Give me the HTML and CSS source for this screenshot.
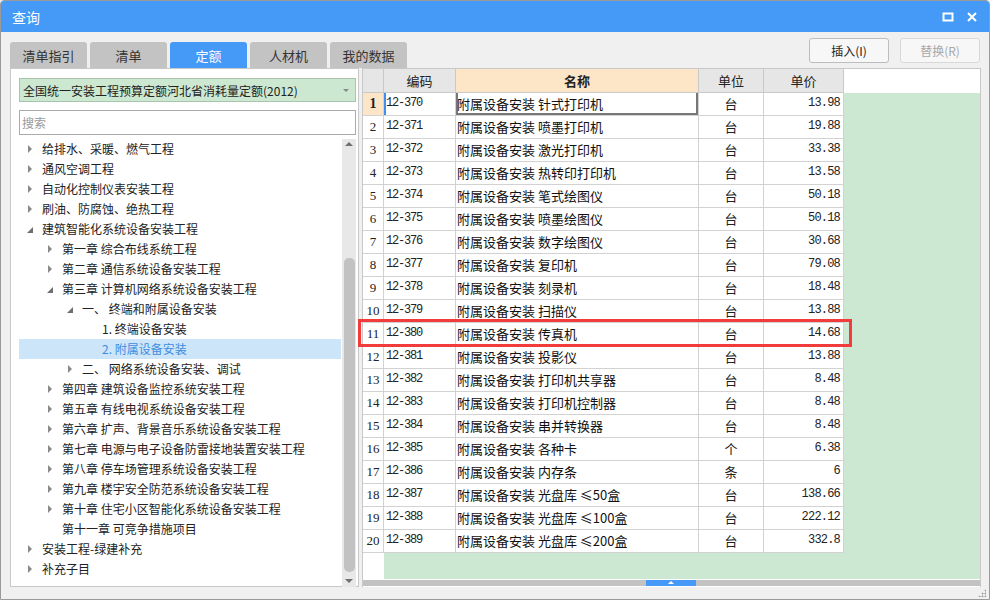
FILE: index.html
```html
<!DOCTYPE html>
<html lang="zh">
<head>
<meta charset="utf-8">
<title>查询</title>
<link rel="stylesheet" href="styles.css">
</head>
<body>
<div class="window">
  <div class="titlebar">
    <span class="title">查询</span>
    <div class="winbtns">
      <svg width="12" height="12" viewBox="0 0 12 12"><rect x="1.5" y="2.5" width="9" height="7" fill="none" stroke="#fff" stroke-width="2"/></svg>
      <svg width="12" height="12" viewBox="0 0 12 12"><path d="M2 2 L10 10 M10 2 L2 10" stroke="#fff" stroke-width="2"/></svg>
    </div>
  </div>
  <div class="toolbar">
    <div class="tabs">
      <div class="tab">清单指引</div>
      <div class="tab">清单</div>
      <div class="tab active">定额</div>
      <div class="tab">人材机</div>
      <div class="tab">我的数据</div>
    </div>
    <div class="buttons">
      <button class="btn">插入(I)</button>
      <button class="btn disabled">替换(R)</button>
    </div>
  </div>
  <div class="main">
    <div class="leftpanel">
      <div class="select">全国统一安装工程预算定额河北省消耗量定额(2012)<span class="caret"></span></div>
      <div class="search">搜索</div>
      <div class="treewrap">
        <div class="tree">
          <div class="node l0"><span class="arr c"></span>给排水、采暖、燃气工程</div>
          <div class="node l0"><span class="arr c"></span>通风空调工程</div>
          <div class="node l0"><span class="arr c"></span>自动化控制仪表安装工程</div>
          <div class="node l0"><span class="arr c"></span>刷油、防腐蚀、绝热工程</div>
          <div class="node l0"><span class="arr e"></span>建筑智能化系统设备安装工程</div>
          <div class="node l1"><span class="arr c"></span>第一章 综合布线系统工程</div>
          <div class="node l1"><span class="arr c"></span>第二章 通信系统设备安装工程</div>
          <div class="node l1"><span class="arr e"></span>第三章 计算机网络系统设备安装工程</div>
          <div class="node l2"><span class="arr e"></span>一、 终端和附属设备安装</div>
          <div class="node l3"><span class="arr"></span>1. 终端设备安装</div>
          <div class="node l3 sel"><span class="arr"></span>2. 附属设备安装</div>
          <div class="node l2"><span class="arr c"></span>二、 网络系统设备安装、调试</div>
          <div class="node l1"><span class="arr c"></span>第四章 建筑设备监控系统安装工程</div>
          <div class="node l1"><span class="arr c"></span>第五章 有线电视系统设备安装工程</div>
          <div class="node l1"><span class="arr c"></span>第六章 扩声、背景音乐系统设备安装工程</div>
          <div class="node l1"><span class="arr c"></span>第七章 电源与电子设备防雷接地装置安装工程</div>
          <div class="node l1"><span class="arr c"></span>第八章 停车场管理系统设备安装工程</div>
          <div class="node l1"><span class="arr c"></span>第九章 楼宇安全防范系统设备安装工程</div>
          <div class="node l1"><span class="arr c"></span>第十章 住宅小区智能化系统设备安装工程</div>
          <div class="node l1"><span class="arr"></span>第十一章 可竞争措施项目</div>
          <div class="node l0"><span class="arr c"></span>安装工程-绿建补充</div>
          <div class="node l0"><span class="arr c"></span>补充子目</div>
        </div>
        <div class="vscroll">
          <span class="up"></span>
          <div class="vtrack"><div class="vthumb"></div></div>
          <span class="down"></span>
        </div>
      </div>
    </div>
    <div class="tablepanel">
      <div class="grid">
        <div class="hd"></div><div class="hd">编码</div><div class="hd name">名称</div><div class="hd">单位</div><div class="hd">单价</div><div class="hfill"></div>

        <div class="rn first">1</div><div class="code cur">12-370</div><div class="nm focus">附属设备安装 针式打印机</div><div class="un">台</div><div class="pr">13.98</div><div class="fill"></div>
        <div class="rn">2</div><div class="code">12-371</div><div class="nm">附属设备安装 喷墨打印机</div><div class="un">台</div><div class="pr">19.88</div><div class="fill"></div>
        <div class="rn">3</div><div class="code">12-372</div><div class="nm">附属设备安装 激光打印机</div><div class="un">台</div><div class="pr">33.38</div><div class="fill"></div>
        <div class="rn">4</div><div class="code">12-373</div><div class="nm">附属设备安装 热转印打印机</div><div class="un">台</div><div class="pr">13.58</div><div class="fill"></div>
        <div class="rn">5</div><div class="code">12-374</div><div class="nm">附属设备安装 笔式绘图仪</div><div class="un">台</div><div class="pr">50.18</div><div class="fill"></div>
        <div class="rn">6</div><div class="code">12-375</div><div class="nm">附属设备安装 喷墨绘图仪</div><div class="un">台</div><div class="pr">50.18</div><div class="fill"></div>
        <div class="rn">7</div><div class="code">12-376</div><div class="nm">附属设备安装 数字绘图仪</div><div class="un">台</div><div class="pr">30.68</div><div class="fill"></div>
        <div class="rn">8</div><div class="code">12-377</div><div class="nm">附属设备安装 复印机</div><div class="un">台</div><div class="pr">79.08</div><div class="fill"></div>
        <div class="rn">9</div><div class="code">12-378</div><div class="nm">附属设备安装 刻录机</div><div class="un">台</div><div class="pr">18.48</div><div class="fill"></div>
        <div class="rn">10</div><div class="code">12-379</div><div class="nm">附属设备安装 扫描仪</div><div class="un">台</div><div class="pr">13.88</div><div class="fill"></div>
        <div class="rn">11</div><div class="code">12-380</div><div class="nm">附属设备安装 传真机</div><div class="un">台</div><div class="pr">14.68</div><div class="fill"></div>
        <div class="rn">12</div><div class="code">12-381</div><div class="nm">附属设备安装 投影仪</div><div class="un">台</div><div class="pr">13.88</div><div class="fill"></div>
        <div class="rn">13</div><div class="code">12-382</div><div class="nm">附属设备安装 打印机共享器</div><div class="un">台</div><div class="pr">8.48</div><div class="fill"></div>
        <div class="rn">14</div><div class="code">12-383</div><div class="nm">附属设备安装 打印机控制器</div><div class="un">台</div><div class="pr">8.48</div><div class="fill"></div>
        <div class="rn">15</div><div class="code">12-384</div><div class="nm">附属设备安装 串并转换器</div><div class="un">台</div><div class="pr">8.48</div><div class="fill"></div>
        <div class="rn">16</div><div class="code">12-385</div><div class="nm">附属设备安装 各种卡</div><div class="un">个</div><div class="pr">6.38</div><div class="fill"></div>
        <div class="rn">17</div><div class="code">12-386</div><div class="nm">附属设备安装 内存条</div><div class="un">条</div><div class="pr">6</div><div class="fill"></div>
        <div class="rn">18</div><div class="code">12-387</div><div class="nm">附属设备安装 光盘库 ≤50盒</div><div class="un">台</div><div class="pr">138.66</div><div class="fill"></div>
        <div class="rn">19</div><div class="code">12-388</div><div class="nm">附属设备安装 光盘库 ≤100盒</div><div class="un">台</div><div class="pr">222.12</div><div class="fill"></div>
        <div class="rn">20</div><div class="code">12-389</div><div class="nm">附属设备安装 光盘库 ≤200盒</div><div class="un">台</div><div class="pr">332.8</div><div class="fill"></div>
      </div>
      <div class="tail"><div class="tailrn"></div><div class="tailfill"></div></div>
      <div class="hscroll"><div class="hthumb"><span class="hup"></span></div></div>
      <div class="redbox"></div>
    </div>
  </div>
  <div class="statusbar"><span class="grip"></span></div>
</div>
</body>
</html>
```
FILE: styles.css
```css
* { box-sizing: border-box; }
html, body { margin: 0; padding: 0; }
body {
  width: 990px;
  height: 600px;
  overflow: hidden;
  font-family: "Noto Sans CJK SC", "Liberation Sans", sans-serif;
  font-size: 12px;
  color: #222;
  background: #fff;
}
.window {
  width: 990px;
  height: 600px;
  border: 1px solid #9a9a9a;
  border-radius: 4px 4px 0 0;
  background: #f0f0f0;
  display: flex;
  flex-direction: column;
  overflow: hidden;
}
.titlebar {
  height: 31px;
  flex: none;
  background: #4599f7;
  display: flex;
  align-items: center;
  justify-content: space-between;
  padding: 0 11px 0 11px;
}
.title { color: #fff; font-size: 14px; }
.winbtns { display: flex; gap: 12px; align-items: center; }
.winbtns svg { display: block; }

.toolbar {
  height: 36px;
  flex: none;
  display: flex;
  justify-content: space-between;
  padding: 0 9px 0 9px;
}
.tabs { display: flex; align-items: flex-end; gap: 3px; }
.tab {
  width: 77px;
  height: 26px;
  background: #c3c3c3;
  border-radius: 3px 3px 0 0;
  color: #333;
  font-size: 13px;
  display: flex;
  align-items: center;
  justify-content: center;
}
.tab.active { background: #4599f7; color: #fff; }
.buttons { display: flex; gap: 11px; padding-top: 6px; }
.btn {
  width: 80px;
  height: 25px;
  border: 1px solid #bdbdbd;
  border-radius: 3px;
  background: #f7f7f7;
  font-family: "Noto Sans CJK SC", "Liberation Sans", sans-serif;
  font-size: 12px;
  color: #222;
  padding: 0;
}
.btn.disabled { color: #a8a8a8; border-color: #d8d8d8; }

.main {
  height: 519px;
  flex: none;
  display: flex;
  gap: 3px;
  padding-left: 9px;
}
.leftpanel {
  width: 349px;
  height: 519px;
  background: #fff;
  border: 1px solid #c8c8c8;
  padding: 9px 2px 0 8px;
  display: flex;
  flex-direction: column;
}
.select {
  height: 24px;
  width: 337px;
  background: #cde8d0;
  border: 1px solid #a9c4ac;
  display: flex;
  align-items: center;
  padding-left: 3px;
  font-size: 12px;
  position: relative;
}
.caret {
  position: absolute;
  right: 6px;
  top: 10px;
  border-left: 3px solid transparent;
  border-right: 3px solid transparent;
  border-top: 3px solid #888;
}
.search {
  margin-top: 8px;
  height: 25px;
  width: 337px;
  border: 1px solid #aaa;
  display: flex;
  align-items: center;
  padding-left: 2px;
  color: #9a9a9a;
  font-size: 12px;
}
.treewrap {
  margin-top: 4px;
  flex: 1;
  display: flex;
  min-height: 0;
}
.tree { width: 323px; margin-top: 0; }
.node {
  height: 20px;
  display: flex;
  align-items: center;
  white-space: nowrap;
  font-size: 12px;
  color: #222;
  padding-bottom: 1px;
}
.node.l0 { padding-left: 7px; }
.node.l1 { padding-left: 27px; }
.node.l2 { padding-left: 47px; }
.node.l3 { padding-left: 67px; }
.node.sel { background: #cce5f8; color: #3f8de0; }
.arr { width: 16px; flex: none; height: 20px; position: relative; }
.arr.c::before {
  content: "";
  position: absolute;
  left: 2px;
  top: 6px;
  border-top: 4px solid transparent;
  border-bottom: 4px solid transparent;
  border-left: 4px solid #8a8a8a;
}
.arr.e::before {
  content: "";
  position: absolute;
  left: 1px;
  top: 8px;
  border-left: 6px solid transparent;
  border-bottom: 6px solid #6e6e6e;
}
.vscroll {
  width: 14px;
  margin-left: 1px;
  background: #e8e8e8;
  display: flex;
  flex-direction: column;
  align-items: center;
  height: 448px;
}
.up, .down { height: 12px; flex: none; position: relative; width: 14px; }
.up::before {
  content: ""; position: absolute; left: 3px; top: 3px;
  border-left: 4px solid transparent; border-right: 4px solid transparent;
  border-bottom: 4px solid #6f6f6f;
}
.down::before {
  content: ""; position: absolute; left: 3px; top: 4px;
  border-left: 4px solid transparent; border-right: 4px solid transparent;
  border-top: 4px solid #6f6f6f;
}
.vtrack { flex: 1; width: 14px; padding: 107px 1px 3px 2px; }
.vthumb { height: 100%; background: #c2c2c2; border-radius: 5px; }

.tablepanel {
  width: 619px;
  height: 519px;
  border: 1px solid #c8c8c8;
  border-bottom: none;
  background: #fff;
  position: relative;
  display: flex;
  flex-direction: column;
}
.grid {
  display: grid;
  grid-template-columns: 21px 72px 243px 65px 80px 136px;
  grid-template-rows: 24px repeat(20, 23px);
}
.grid > div {
  border-right: 1px solid #d2d2d2;
  border-bottom: 1px solid #d2d2d2;
  display: flex;
  align-items: center;
  white-space: nowrap;
  overflow: hidden;
}
.grid > .hd {
  background: #e6e6e6;
  border-color: #c9c9c9;
  justify-content: center;
  font-size: 13px;
  color: #222;
}
.grid > .hd.name { background: #fde5c7; font-weight: bold; }
.grid > .hfill { border: none; background: #fff; }
.grid > .fill { border: none; background: #cde8d2; }
.grid > .rn {
  justify-content: center;
  font-family: "Liberation Serif", "DejaVu Serif", serif;
  font-size: 13px;
  color: #222;
  padding-bottom: 1px;
}
.grid > .rn.first { background: #fde5c7; font-weight: bold; font-size: 14px; }
.grid > .code {
  font-family: "Liberation Mono", "DejaVu Sans Mono", monospace;
  font-size: 12px;
  letter-spacing: -1.2px;
  padding-left: 2px;
  padding-bottom: 2px;
}
.grid > .code.cur { box-shadow: inset 2px 0 0 #3d8ff0; padding-left: 2px; }
.grid > .nm { font-size: 13px; padding-left: 1px; color: #111; padding-bottom: 1px; }
.grid > .nm.focus { box-shadow: inset 2px 0 0 #777, inset -2px 0 0 #777, inset 0 -2px 0 #777; }
.grid > .un { justify-content: center; font-size: 13px; padding-bottom: 1px; }
.grid > .pr {
  justify-content: flex-end;
  padding-right: 3px;
  padding-bottom: 2px;
  font-family: "Liberation Mono", "DejaVu Sans Mono", monospace;
  font-size: 12px;
  letter-spacing: -0.8px;
}
.tail { display: flex; height: 27px; flex: none; border-bottom: 1px solid #fff; }
.tailrn { width: 21px; background: #fff; }
.tailfill { flex: 1; background: #cde8d2; }
.hscroll {
  height: 6px;
  flex: none;
  background: #c2c2c2;
  padding-left: 283px;
}
.hthumb {
  width: 50px;
  height: 6px;
  background: #4599f7;
  position: relative;
}
.hup {
  position: absolute; left: 22px; top: 1px;
  border-left: 3px solid transparent; border-right: 3px solid transparent;
  border-bottom: 3px solid #fff;
}
.redbox {
  position: absolute;
  left: -5px;
  top: 250px;
  width: 494px;
  height: 28px;
  border: 3px solid #f23b3b;
}
.statusbar {
  flex: 1;
  position: relative;
}
.grip {
  position: absolute;
  right: 3px;
  bottom: 2px;
  width: 8px;
  height: 8px;
  background:
    radial-gradient(circle, #999 0.8px, transparent 1.2px) 0 0 / 3px 3px;
  clip-path: polygon(100% 0, 100% 100%, 0 100%);
}
```
